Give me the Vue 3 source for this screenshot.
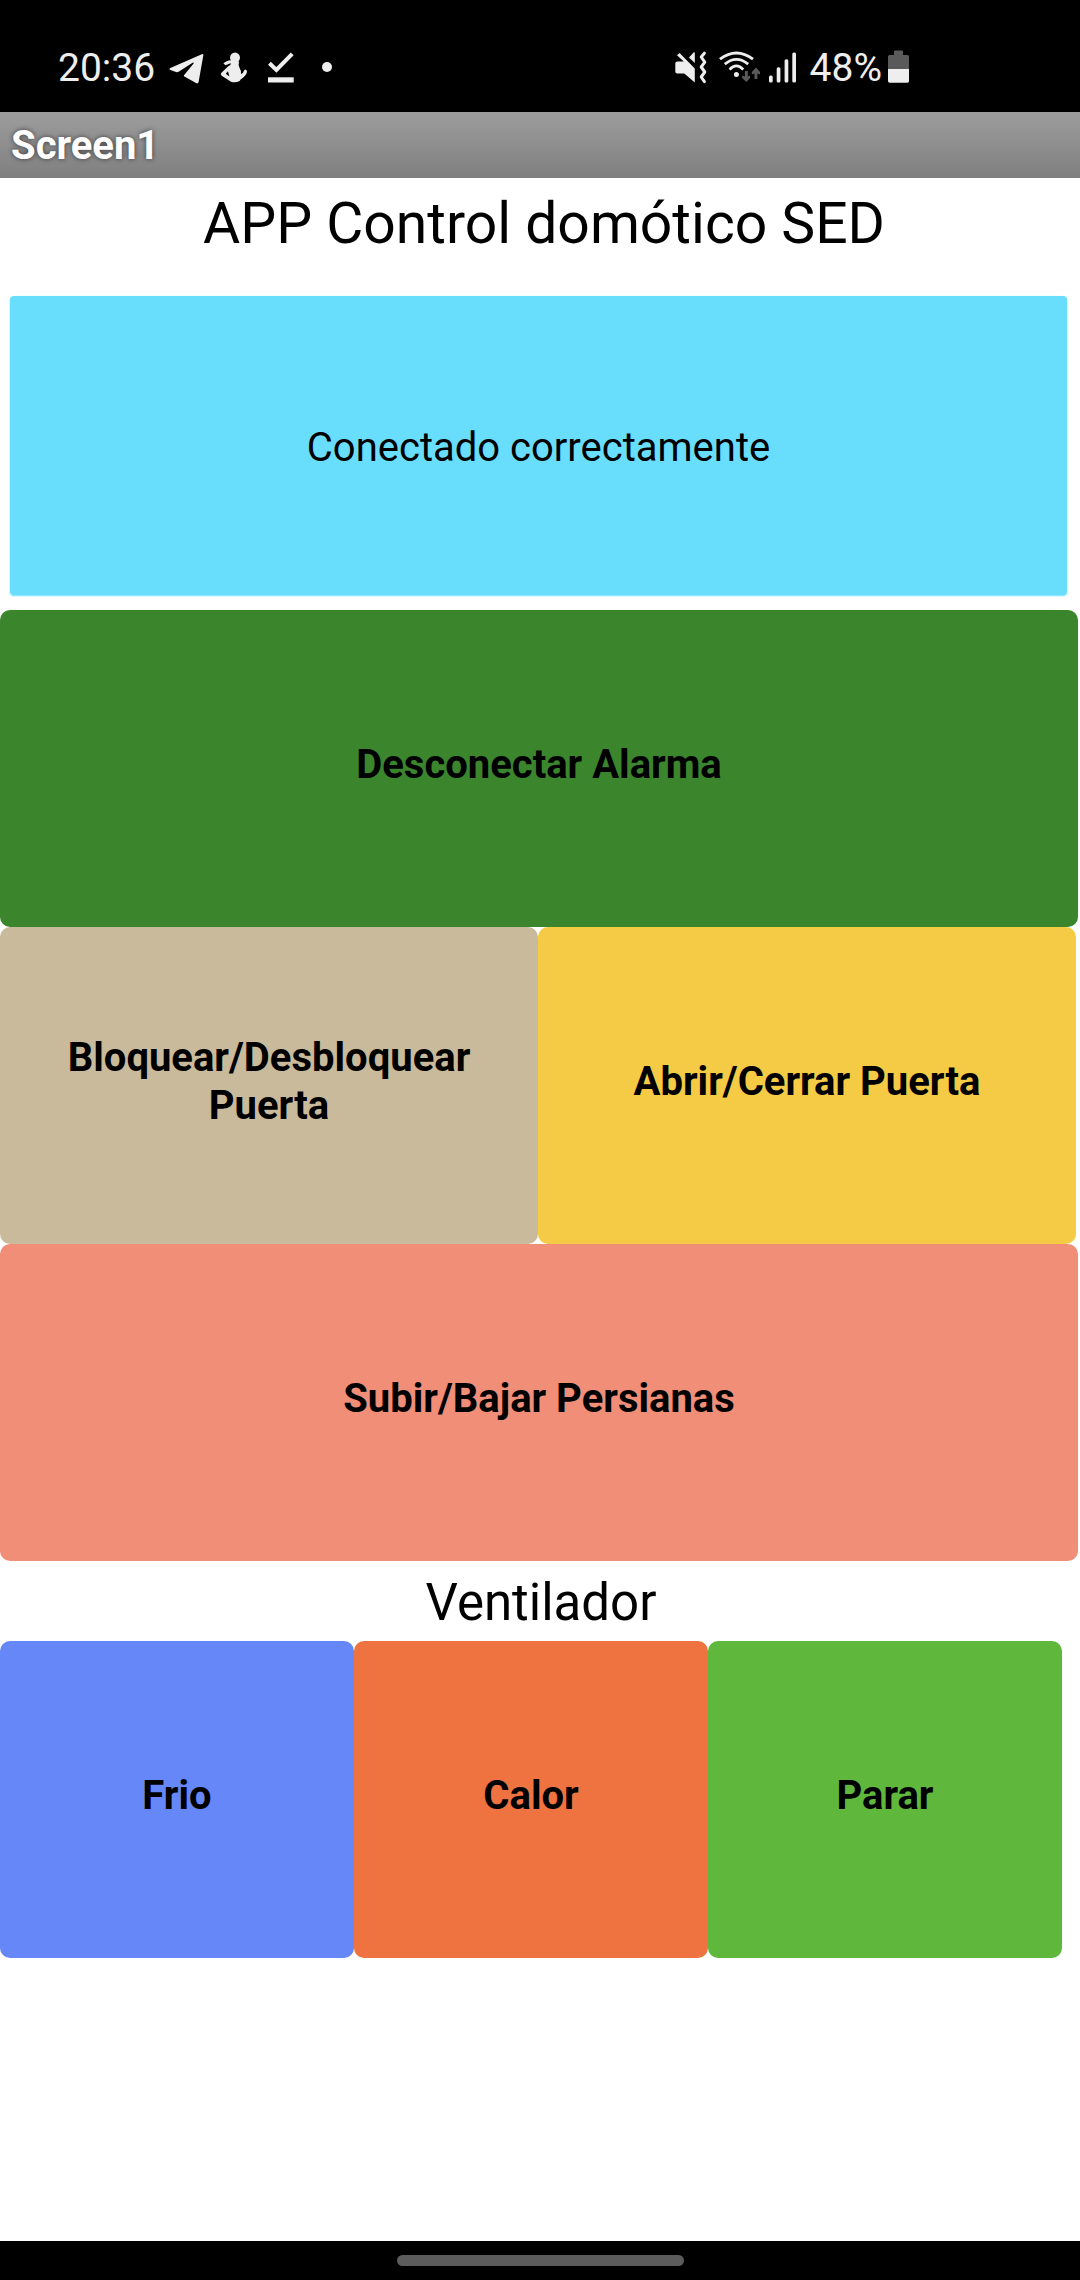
<script setup>
const doorActions = [
  { label: 'Bloquear/Desbloquear Puerta', tone: 'sand' },
  { label: 'Abrir/Cerrar Puerta', tone: 'yellow' },
]

const fanActions = [
  { label: 'Frio', tone: 'blue' },
  { label: 'Calor', tone: 'orange' },
  { label: 'Parar', tone: 'lime' },
]
</script>

<template>
  <div class="screen">
    <header class="status">
      <div class="status-left">
        <span class="status-text">20:36</span>
        <svg width="36" height="36" viewBox="0 0 36 36" aria-hidden="true">
          <path d="M32.8 4.2Q34.6 3.4 34.3 5.4L29.6 32Q29 34.2 27 33L15.4 26.6Q14.4 26 15.2 25L24.6 13.4Q25 12.2 23.6 12.8L9.6 21.8Q8.4 22.4 7 22L1.4 20Q-.4 19 1.4 18Z" />
        </svg>
        <svg width="30" height="36" viewBox="0 0 30 36" aria-hidden="true">
          <ellipse cx="16" cy="7.6" rx="5" ry="5.2" />
          <path d="M12 10.5L20 11.5Q19 15 20.6 18Q22.6 21 22 24Q24.6 22.6 25 20.4L26.2 19.6Q28.6 20.4 27.8 22.6Q27 26 21.6 29.6Q20.6 32.2 15.6 32.2Q11.4 32.2 10.2 30.4L3 26Q1.2 24.8 2.2 23L9 16.6Q10 15.6 11.4 15Z" />
          <path d="M12.4 10.2Q7 10.4 4.4 13.6L6.6 15.2L12.6 12.8Z" />
          <path class="cut" d="M9 21.2L6.8 23.8L10.4 26.6Z" />
        </svg>
        <svg width="36" height="36" viewBox="0 0 36 36" aria-hidden="true">
          <path class="line" stroke-width="4" d="M6.4 13.3L13.4 20L29.2 3.8" />
          <rect x="5" y="27.3" width="25.7" height="5.2" />
        </svg>
        <svg width="28" height="36" viewBox="0 0 28 36" aria-hidden="true">
          <circle cx="14" cy="17" r="5" />
        </svg>
      </div>
      <div class="status-right">
        <svg width="34" height="36" viewBox="0 0 34 36" aria-hidden="true">
          <path d="M1.3 13.5Q1.3 11.5 3.3 11.5H9.8L3 5.2L5.6 3L20.8 18.5V32.5L10.3 23.5H3.3Q1.3 23.5 1.3 21.5Z" />
          <path d="M15 7.6L19.6 2.6Q20.8 1.6 20.8 3V13Z" />
          <path class="line" stroke-width="3" stroke-linecap="round" stroke-linejoin="round" d="M30.4 3.2L27.2 7L30.8 12.2L27.2 17L30.8 22L27.2 27L30.4 31.6" />
        </svg>
        <svg width="44" height="36" viewBox="0 0 44 36" aria-hidden="true">
          <path class="line" stroke-width="2.8" d="M3.9 9.2Q20.4 -3.2 37 9.2M8.8 14.2Q20.4 4.6 32.2 14.2M13.6 19.6Q20.4 12.2 27.2 19.6" />
          <circle cx="20.4" cy="24.4" r="2.5" />
          <g class="dim">
            <path d="M28.9 21H31.8V26.4L34 25.6V28L30.4 32L26.2 28V25.6L28.9 26.6Z" />
            <path d="M38.5 29V23.4L35.8 24.4V22L40 17.6L44 22V24.4L41.4 23.4V29Z" />
          </g>
        </svg>
        <svg width="34" height="36" viewBox="0 0 34 36" aria-hidden="true">
          <rect x="1" y="25.5" width="3.7" height="7" rx="1.5" />
          <rect x="8.7" y="17.3" width="3.7" height="15.2" rx="1.5" />
          <rect x="16.6" y="9.3" width="3.7" height="23.2" rx="1.5" />
          <rect x="24.3" y="2.5" width="3.7" height="30" rx="1.5" />
        </svg>
        <div class="battery">
          <span class="status-text">48%</span>
          <svg width="26" height="36" viewBox="0 0 26 36" aria-hidden="true">
            <path class="dim" d="M8 5V1.5Q8 .5 9 .5H16Q17 .5 17 1.5V5H21.5Q23 5 23 6.5V19H2V6.5Q2 5 3.5 5Z" />
            <path d="M2 19H23V31Q23 32.7 21.3 32.7H3.7Q2 32.7 2 31Z" />
          </svg>
        </div>
      </div>
    </header>

    <div class="titlebar">Screen1</div>

    <main class="content">
      <h1 class="heading">APP Control domótico SED</h1>
      <button type="button" class="connect">Conectado correctamente</button>
      <div class="row wide">
        <button type="button" class="tile green">Desconectar Alarma</button>
      </div>
      <div class="row pair">
        <button v-for="a in doorActions" :key="a.label" type="button" class="tile" :class="a.tone">
          {{ a.label }}
        </button>
      </div>
      <div class="row wide">
        <button type="button" class="tile salmon">Subir/Bajar Persianas</button>
      </div>
      <h2 class="subheading">Ventilador</h2>
      <div class="row trio">
        <button v-for="a in fanActions" :key="a.label" type="button" class="tile" :class="a.tone">
          {{ a.label }}
        </button>
      </div>
    </main>

    <footer class="navbar"><span class="handle"></span></footer>
  </div>
</template>

<style>
body {
  margin: 0;
  background: #fff;
}
</style>

<style scoped>
.screen {
  display: flex;
  flex-direction: column;
  min-height: 100vh;
  font-family: Roboto, "Liberation Sans", sans-serif;
  color: #000;
  background: #fff;
}

.status {
  display: flex;
  justify-content: space-between;
  box-sizing: border-box;
  height: 112px;
  padding: 50px 168px 0 58px;
  background: #000;
  color: #eee;
}

.status-left,
.status-right,
.battery {
  display: flex;
  align-items: center;
  height: 36px;
}

.status-left {
  gap: 14px;
}

.status-right {
  gap: 8px;
}

.battery {
  gap: 4px;
}

.status-text {
  font-size: 39px;
  line-height: 36px;
}

svg {
  display: block;
  flex: none;
  fill: #eee;
}

.line {
  fill: none;
  stroke: #eee;
}

.dim {
  fill: #5a5a5a;
}

.cut {
  fill: #000;
}

.titlebar {
  padding: 2px 11px 0;
  font-size: 40px;
  font-weight: 700;
  line-height: 64px;
  color: #fff;
  text-shadow: 0 0 5px rgba(0, 0, 0, 0.6);
  background: linear-gradient(#9d9d9d, #7f7f7f);
}

.content {
  flex: 1;
}

.heading,
.subheading {
  margin: 0;
  font-weight: 400;
  text-align: center;
}

.heading {
  padding: 8px 0 26px 8px;
  font-size: 57px;
  line-height: 76px;
}

.subheading {
  padding: 4px 0 0 2px;
  font-size: 51px;
  line-height: 76px;
}

button {
  margin: 0;
  border: 0;
  font: inherit;
  font-size: 40px;
  line-height: 48px;
  color: #000;
}

.connect {
  display: block;
  width: calc(100% - 23px);
  height: 299px;
  margin: 8px 13px 15px 10px;
  padding: 4px 32px 0;
  border-radius: 4px;
  background: #69ddfc;
  box-shadow: 0 1px 2px #69ddfc;
}

.row {
  display: flex;
}

.wide {
  padding-right: 2px;
}

.pair {
  padding-right: 4px;
}

.trio {
  padding-right: 18px;
}

.tile {
  flex: 1 1 0;
  min-width: 0;
  height: 317px;
  padding: 0 32px 8px;
  border-radius: 10px;
  font-weight: 700;
}

.green { background: #3b862d; }
.sand { background: #c9ba9b; }
.yellow { background: #f5ca45; }
.salmon { background: #f08e78; }
.blue { background: #6687f7; }
.orange { background: #ee7340; }
.lime { background: #5fb83c; }

.navbar {
  display: flex;
  justify-content: center;
  align-items: center;
  height: 39px;
  background: #000;
}

.handle {
  width: 287px;
  height: 11px;
  border-radius: 6px;
  background: #5c5c5c;
}
</style>
